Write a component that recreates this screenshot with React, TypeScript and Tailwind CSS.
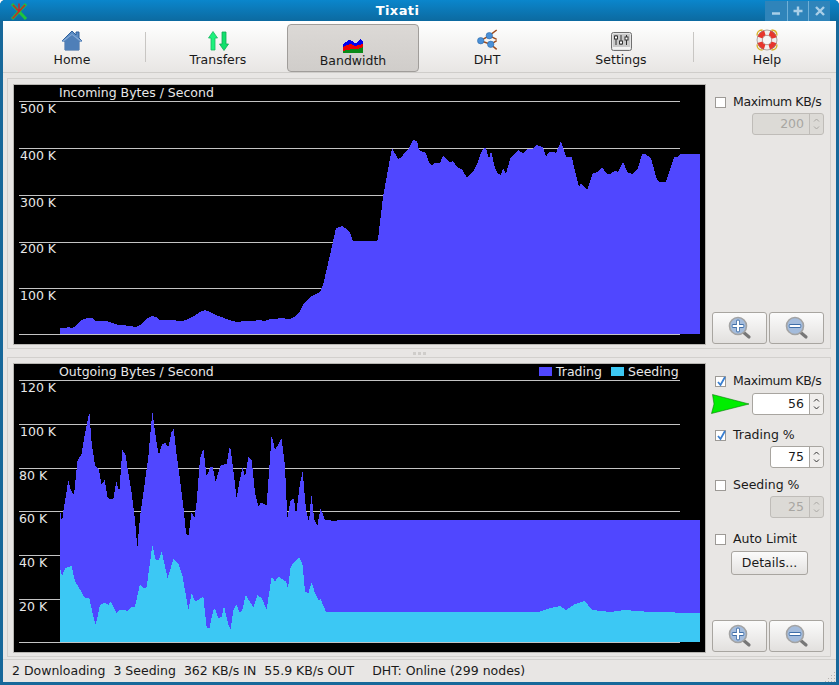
import type { ReactNode } from "react";

const fromZoom = (pts: number[][]) => pts.map(([x, y]) => `${x / 3},${360 + y / 3}`).join(" ");

const incoming =
  "60,328 66,328 68,327 72,328 76,326 80,321 84,319 88,318 92,318 95,321 100,321 106,321 112,323 118,325 122,325 130,326 136,327 140,325 144,321 148,318 152,316 156,317 160,320 170,320 182,321 188,319 194,316 200,312 205,310 210,312 216,315 224,318 232,321 238,322 244,321 252,321 260,320 264,321 270,319 276,319 280,318 290,319 296,316 300,311 304,303 310,297 316,294 320,292 323,285 330,255 336,228 342,226 348,230 350,233 353,241 376,241 378,239 383,197 387,175 392,148 398,159 402,157 405,152 409,148 413,140 417,141 419,150 426,153 429,163 432,165 435,163 440,163 443,156 450,162 453,161 458,168 462,169 467,178 474,170 478,162 481,153 484,148 486,148 489,159 491,151 495,168 498,174 501,175 503,168 506,174 510,159 518,150 523,153 527,149 532,149 536,145 543,147 546,157 549,152 553,152 556,153 561,141 566,157 572,157 574,167 579,187 581,183 587,190 590,182 593,173 598,172 602,167 607,174 610,174 615,171 618,172 623,162 628,173 633,174 638,168 642,154 645,154 651,158 657,180 660,182 666,182 674,157 677,157 680,154 700,154";

const trading = [
  [180, 450], [186, 485], [192, 440], [198, 405], [205, 360], [212, 390], [222, 405], [232, 305], [245, 280], [255, 220], [268, 155], [275, 250], [285, 315], [297, 330], [305, 375], [314, 358], [323, 415], [340, 417], [349, 365], [358, 395], [367, 270], [377, 285], [385, 340], [395, 400], [405, 480], [412, 565], [420, 470], [430, 400], [445, 290], [457, 155], [470, 250], [477, 285], [485, 255], [495, 247], [505, 262], [515, 215], [521, 207], [530, 285], [540, 360], [550, 440], [558, 518], [565, 530], [575, 455], [583, 475], [590, 425], [600, 295], [610, 265], [620, 350], [630, 322], [638, 320], [647, 365], [662, 315], [680, 312], [690, 255], [700, 330], [710, 415], [718, 365], [728, 322], [735, 350], [745, 290], [755, 300], [765, 400], [775, 440], [782, 428], [800, 435], [815, 225], [825, 270], [845, 235], [855, 320], [862, 475], [872, 420], [882, 415], [888, 465], [900, 370], [908, 335], [918, 450], [927, 485], [934, 403], [943, 480], [952, 497], [962, 445], [975, 480], [1000, 482], [1050, 480], [1300, 479], [1650, 480], [2100, 481],
];

const seeding = [
  [180, 622], [186, 650], [195, 625], [215, 618], [225, 665], [240, 688], [255, 715], [268, 715], [280, 770], [287, 795], [300, 735], [315, 727], [325, 735], [332, 725], [350, 760], [360, 750], [385, 752], [395, 742], [405, 740], [420, 672], [430, 685], [440, 682], [457, 555], [467, 600], [477, 600], [485, 575], [503, 655], [520, 597], [535, 610], [548, 650], [565, 750], [575, 700], [585, 725], [610, 710], [620, 803], [628, 805], [640, 750], [645, 745], [655, 775], [665, 770], [672, 738], [685, 795], [692, 807], [700, 750], [710, 733], [718, 758], [727, 750], [737, 705], [760, 742], [772, 705], [785, 715], [800, 748], [815, 650], [825, 665], [835, 650], [858, 665], [864, 685], [872, 620], [885, 603], [898, 592], [908, 615], [915, 695], [925, 700], [935, 667], [945, 700], [955, 720], [962, 718], [978, 755], [1620, 755], [1650, 744], [1680, 738], [1698, 750], [1725, 732], [1755, 723], [1776, 750], [1830, 756], [1875, 750], [1950, 756], [2100, 759],
];

function HomeIcon() {
  return (
    <svg width="22" height="21" viewBox="0 0 22 21">
      <path d="M1 11 11 1l4 4V2h3v6l3 3h-3v9H4v-9z" fill="#5b8cc4" stroke="#2f5f9a" strokeLinejoin="round" />
      <path d="M4 11 11 4l7 7v9H4z" fill="#4f7fb8" />
      <path d="M11 4 1 11l1 1 9-7 9 7 1-1z" fill="#85aad6" />
    </svg>
  );
}

function TransfersIcon() {
  return (
    <svg width="21" height="20" viewBox="0 0 21 20">
      <path d="M5 0.500 9.500 7H7v12H3V7H0.500z" fill="#1df27c" stroke="#18b861" strokeWidth="0.800" />
      <path d="M16 19.500 20.500 13H18V1h-4v12h-2.500z" fill="#12e06c" stroke="#12a857" strokeWidth="0.800" />
    </svg>
  );
}

function BandwidthIcon() {
  return (
    <svg width="20" height="14" viewBox="0 0 20 14" shapeRendering="crispEdges">
      <path d="M0 5 3 3 6 1 9 2 12 4 15 3 17 0 20 2V14H0z" fill="#0000ee" />
      <path d="M0 8 4 6 8 5 12 7 16 6 20 5V14H0z" fill="#ee0000" />
      <path d="M0 12 4 11 9 10 14 10 20 8V14H0z" fill="#0a8a18" />
    </svg>
  );
}

function DhtIcon() {
  return (
    <svg width="21" height="22" viewBox="0 0 21 22">
      <g stroke="#9c4a1c" strokeWidth="1.500" fill="none">
        <path d="M3.700 11.700 12.300 6.700 19.700 1" />
        <path d="M12.300 6.700 19.700 10.300" />
        <path d="M3.700 11.700 13.700 15.300 19.700 20.300" />
        <path d="M13.700 15.300 19.700 11.700" />
      </g>
      <circle cx="3.700" cy="11.700" r="3.200" fill="#4a90d8" stroke="#2f6aa8" strokeWidth="0.600" />
      <circle cx="12.300" cy="6.700" r="3.200" fill="#4a90d8" stroke="#2f6aa8" strokeWidth="0.600" />
      <circle cx="13.700" cy="15.300" r="3.200" fill="#4a90d8" stroke="#2f6aa8" strokeWidth="0.600" />
    </svg>
  );
}

function SettingsIcon() {
  return (
    <svg width="21" height="19" viewBox="0 0 21 19">
      <rect x="0.500" y="0.500" width="20" height="18" rx="2" fill="#e4e4e4" stroke="#6f6f6f" />
      <rect x="2" y="2" width="17" height="13" fill="#c9c9c9" />
      <g stroke="#333" strokeWidth="1" fill="none">
        <path d="M5 3v10M10 3v10M15.500 3v10" />
        <rect x="3.500" y="4" width="3" height="3" fill="#fff" />
        <rect x="8.500" y="9" width="3" height="3" fill="#fff" />
        <rect x="14" y="5" width="3" height="3" fill="#fff" />
      </g>
      <path d="M2 16h17" stroke="#f8f8f8" strokeWidth="1.500" />
    </svg>
  );
}

function HelpIcon() {
  return (
    <svg width="22" height="22" viewBox="0 0 22 22">
      <circle cx="11" cy="11" r="7.500" fill="none" stroke="#f0eeee" strokeWidth="5.500" />
      <circle cx="11" cy="11" r="7.500" fill="none" stroke="#e8352c" strokeWidth="5.500" strokeDasharray="7 4.780" strokeDashoffset="-2.400" />
      <circle cx="11" cy="11" r="10" fill="none" stroke="#8f8580" strokeWidth="0.700" />
      <circle cx="11" cy="11" r="4.700" fill="#f6f6f6" stroke="#a07068" strokeWidth="0.700" />
      <path d="M1 6.500Q1 1 6.500 1M15.500 1Q21 1 21 6.500M21 15.500Q21 21 15.500 21M6.500 21Q1 21 1 15.500" fill="none" stroke="#d8b020" strokeWidth="1.300" />
    </svg>
  );
}

function ToolItem({ label, icon }: { label: string; icon: ReactNode }) {
  return (
    <div className="flex h-full w-[134px] shrink-0 flex-col items-center">
      <div className="flex h-[31px] items-end justify-center pb-px">{icon}</div>
      <span className="leading-[15px]">{label}</span>
    </div>
  );
}

function Sep() {
  return <div className="mt-[11px] h-[30px] w-px bg-[#c8c6c3]" />;
}

function Checkbox({ checked }: { checked?: boolean }) {
  return (
    <span className="relative block h-[11px] w-[11px] shrink-0 border border-[#9d9a96] bg-white">
      {checked && (
        <svg className="absolute -top-[2px] left-0" width="11" height="13" viewBox="0 0 11 13">
          <path d="M2 7 4.500 10 9 2" fill="none" stroke="#3a7fd0" strokeWidth="1.800" />
        </svg>
      )}
    </span>
  );
}

function CheckRow({ label, checked, className }: { label: string; checked?: boolean; className: string }) {
  return (
    <div className={`flex h-4 items-center pl-[3px] ${className}`}>
      <Checkbox checked={checked} />
      <span className="ml-[7px] whitespace-nowrap">{label}</span>
    </div>
  );
}

function Spin({ value, disabled, className }: { value: string; disabled?: boolean; className: string }) {
  const arrow = disabled ? "#aaa8a4" : "#333";
  return (
    <div className={`flex h-[22px] rounded-[3px] border ${disabled ? "border-[#bfbcb8] bg-[#dcdad6] text-[#a8a6a2]" : "border-[#a8a5a0] bg-white"} ${className}`}>
      <span className="flex-1 pr-[5px] text-right leading-[20px]">{value}</span>
      <span className={`flex w-[14px] items-center justify-center border-l ${disabled ? "border-[#bfbcb8]" : "border-[#a8a5a0] bg-[#f0eeec]"} rounded-r-[3px]`}>
        <svg width="7" height="14" viewBox="0 0 7 14">
          <path d="M1 4.500 3.500 2 6 4.500M1 9.500 3.500 12 6 9.500" fill="none" stroke={arrow} strokeWidth="1" />
        </svg>
      </span>
    </div>
  );
}

function ZoomIcon({ plus }: { plus?: boolean }) {
  return (
    <svg width="24" height="24" viewBox="0 0 24 24">
      <path d="M14 15 21 21" stroke="#777" strokeWidth="3.200" strokeLinecap="round" />
      <circle cx="10" cy="10" r="8.500" fill="#a4bcdc" stroke="#a3a3a3" strokeWidth="1.600" />
      <path d={plus ? "M5.500 10h9M10 5.500v9" : "M5.500 10h9"} stroke="#3f6ea8" strokeWidth="3.800" strokeLinecap="round" />
      <path d={plus ? "M5.500 10h9M10 5.500v9" : "M5.500 10h9"} stroke="#fff" strokeWidth="2.200" strokeLinecap="round" />
    </svg>
  );
}

function ZoomButtons() {
  return (
    <div className="mt-auto mb-px flex gap-[2px]">
      {[true, false].map((plus) => (
        <div key={String(plus)} className="flex h-8 w-[55px] items-center justify-center rounded-[3px] border border-[#a8a5a0] bg-gradient-to-b from-[#fbfbfb] to-[#e2e0de]">
          <ZoomIcon plus={plus} />
        </div>
      ))}
    </div>
  );
}

function Axis({ y, label, x = 20 }: { y: number; label: string; x?: number }) {
  return (
    <text x={x} y={y} className="fill-[#e8e8e8] text-[12.5px]">{label}</text>
  );
}

function Grid({ ys }: { ys: number[] }) {
  return (
    <g stroke="#c4c4c4" shapeRendering="crispEdges">
      {ys.map((y) => <line key={y} x1="19" x2="680" y1={y + 0.5} y2={y + 0.5} />)}
    </g>
  );
}

function Panel({ h, chartH, children, chart }: { h: string; chartH: string; children: ReactNode; chart: ReactNode }) {
  return (
    <section className={`mr-[5px] ml-[4px] flex border border-[#d2d0cd] pt-[5px] pb-[3px] pl-[5px] ${h}`}>
      <div className={`w-[693px] shrink-0 border border-[#b8b6b2] bg-black ${chartH}`}>{chart}</div>
      <div className="flex min-w-0 flex-1 flex-col pr-[6px] pl-[6px]">{children}</div>
    </section>
  );
}

export default function App() {
  return (
    <div className="flex h-[685px] w-[839px] flex-col overflow-hidden rounded-t-[5px] bg-[#17689a] px-[3px] pb-[3px] font-['DejaVu_Sans',sans-serif] text-[12.5px] text-[#1a1a1a]">
      <header className="-mx-[3px] flex h-[21px] shrink-0 items-center rounded-t-[5px] bg-gradient-to-b from-[#0a86cc] to-[#0c6aa0]">
        <svg className="ml-[10px]" width="18" height="18" viewBox="0 0 18 18">
          <path d="M2 2 16 17M16 2 2 17" stroke="#1fc43e" strokeWidth="3" />
          <path d="M9 9.500 2.500 16.500M9 9.500 3 3M9 9.500 15 3M9 1.500V9" stroke="#c8242c" strokeWidth="1.500" />
        </svg>
        <span className="flex-1 pl-[2px] text-center text-[13px] font-bold tracking-[0.4px] text-white">Tixati</span>
        <div className="mr-[9px] flex h-[20px]">
          <span className="flex w-[22px] items-center justify-center bg-[#2f84ba] text-[#a9cfe8]">
            <svg width="10" height="10" viewBox="0 0 10 10"><path d="M1 7.500h8" stroke="currentColor" strokeWidth="2.400" /></svg>
          </span>
          <span className="flex w-[21px] items-center justify-center border-l border-[#6fb0d8] bg-[#2f84ba] text-[#a9cfe8]">
            <svg width="10" height="10" viewBox="0 0 10 10"><path d="M0.500 5h9M5 0.500v9" stroke="currentColor" strokeWidth="2.400" /></svg>
          </span>
          <span className="flex w-[22px] items-center justify-center border-l border-[#6fb0d8] bg-[#2f84ba] text-[#a9cfe8]">
            <svg width="10" height="10" viewBox="0 0 10 10"><path d="M1 1l8 8M9 1l-8 8" stroke="currentColor" strokeWidth="2.400" /></svg>
          </span>
        </div>
      </header>

      <div className="flex flex-1 flex-col bg-[#e8e6e4]">
        <nav className="flex h-[52px] shrink-0 border-b border-[#cfcdca] bg-gradient-to-b from-white to-[#e8e6e4] pl-[2px]">
          <ToolItem label="Home" icon={<HomeIcon />} />
          <div className="ml-[6px] mr-[5px]"><Sep /></div>
          <ToolItem label="Transfers" icon={<TransfersIcon />} />
          <div className="mt-[3px] mr-px ml-[2px] flex h-[48px] w-[132px] shrink-0 flex-col items-center rounded-[4px] border border-[#a09d9a] bg-gradient-to-b from-[#dcd9d6] to-[#d0cdca]">
            <div className="flex h-[28px] items-end justify-center"><BandwidthIcon /></div>
            <span className="leading-[15px]">Bandwidth</span>
          </div>
          <ToolItem label="DHT" icon={<DhtIcon />} />
          <ToolItem label="Settings" icon={<SettingsIcon />} />
          <div className="ml-[5px] mr-[6px]"><Sep /></div>
          <ToolItem label="Help" icon={<HelpIcon />} />
        </nav>

        <div className="h-[5px] shrink-0" />

        <Panel
          h="h-[271px]"
          chartH="h-[261px]"
          chart={
            <svg className="block" width="691" height="259" viewBox="14 85 691 259">
              <Grid ys={[101, 148, 195, 242, 288, 334]} />
              <polygon points={`${incoming} 700,334 60,334`} fill="#5047ff" shapeRendering="crispEdges" />
              <text x="59" y="97" className="fill-[#e8e8e8] text-[12.5px]">Incoming Bytes / Second</text>
              <Axis y={113} label="500 K" />
              <Axis y={160} label="400 K" />
              <Axis y={207} label="300 K" />
              <Axis y={253} label="200 K" />
              <Axis y={300} label="100 K" />
            </svg>
          }
        >
          <CheckRow label="Maximum KB/s" className="mt-[10px] tracking-[-0.4px]" />
          <Spin value="200" disabled className="mt-[3px] ml-[40px] w-[72px]" />
          <ZoomButtons />
        </Panel>

        <div className="flex h-[8px] shrink-0 items-center justify-center gap-[2px]">
          <span className="h-[3px] w-[3px] bg-[#cfcdca]" />
          <span className="h-[3px] w-[3px] bg-[#cfcdca]" />
          <span className="h-[3px] w-[3px] bg-[#cfcdca]" />
        </div>

        <Panel
          h="h-[300px]"
          chartH="h-[290px]"
          chart={
            <svg className="block" width="691" height="288" viewBox="14 364 691 288">
              <Grid ys={[380, 424, 468, 511, 555, 599, 642]} />
              <polygon points={`${fromZoom(trading)} 700,642 60,642`} fill="#5047ff" shapeRendering="crispEdges" />
              <polygon points={`${fromZoom(seeding)} 700,642 60,642`} fill="#3cc8f4" shapeRendering="crispEdges" />
              <text x="59" y="376" className="fill-[#e8e8e8] text-[12.5px]">Outgoing Bytes / Second</text>
              <rect x="539" y="367" width="13" height="9" fill="#5047ff" />
              <text x="556" y="376" className="fill-[#e8e8e8] text-[12.5px]">Trading</text>
              <rect x="611" y="367" width="13" height="9" fill="#3cc8f4" />
              <text x="628" y="376" className="fill-[#e8e8e8] text-[12.5px]">Seeding</text>
              <Axis y={392} label="120 K" />
              <Axis y={436} label="100 K" />
              <Axis x={19} y={480} label="80 K" />
              <Axis x={19} y={523} label="60 K" />
              <Axis x={19} y={567} label="40 K" />
              <Axis x={19} y={611} label="20 K" />
            </svg>
          }
        >
          <CheckRow label="Maximum KB/s" checked className="mt-[10px] tracking-[-0.4px]" />
          <div className="mt-[4px] flex items-center">
            <svg className="-ml-px" width="40" height="20" viewBox="0 0 40 20">
              <polygon points="1.500,0.500 38,10 0.500,19.500 3,10" fill="#00ee00" stroke="#0a7a0a" strokeWidth="0.600" />
            </svg>
            <Spin value="56" className="ml-auto w-[72px]" />
          </div>
          <CheckRow label="Trading %" checked className="mt-[12px]" />
          <Spin value="75" className="mt-[3px] ml-[58px] w-[54px]" />
          <CheckRow label="Seeding %" className="mt-[9px]" />
          <Spin value="25" disabled className="mt-[3px] ml-[58px] w-[54px]" />
          <CheckRow label="Auto Limit" className="mt-[13px]" />
          <div className="mt-[4px] ml-[19px] flex h-6 w-[77px] items-center justify-center rounded-[3px] border border-[#a8a5a0] bg-gradient-to-b from-[#fbfbfb] to-[#e4e2e0]">Details...</div>
          <ZoomButtons />
        </Panel>

        <footer className="relative mt-[2px] flex flex-1 items-center border-t border-[#d2d0cd] pl-[9px] whitespace-nowrap">
          <span>2 Downloading</span>
          <span className="ml-[8px]">3 Seeding</span>
          <span className="ml-[8px]">362 KB/s IN</span>
          <span className="ml-[8px]">55.9 KB/s OUT</span>
          <span className="ml-[18px]">DHT: Online (299 nodes)</span>
          <svg className="absolute right-0 bottom-0" width="11" height="11" viewBox="0 0 11 11">
            <path d="M9 1h1v1H9zM6 4h1v1H6zM9 4h1v1H9zM3 7h1v1H3zM6 7h1v1H6zM9 7h1v1H9zM0 10h1v1H0zM3 10h1v1H3zM6 10h1v1H6zM9 10h1v1H9z" fill="#b5b2ae" />
          </svg>
        </footer>
      </div>
    </div>
  );
}
